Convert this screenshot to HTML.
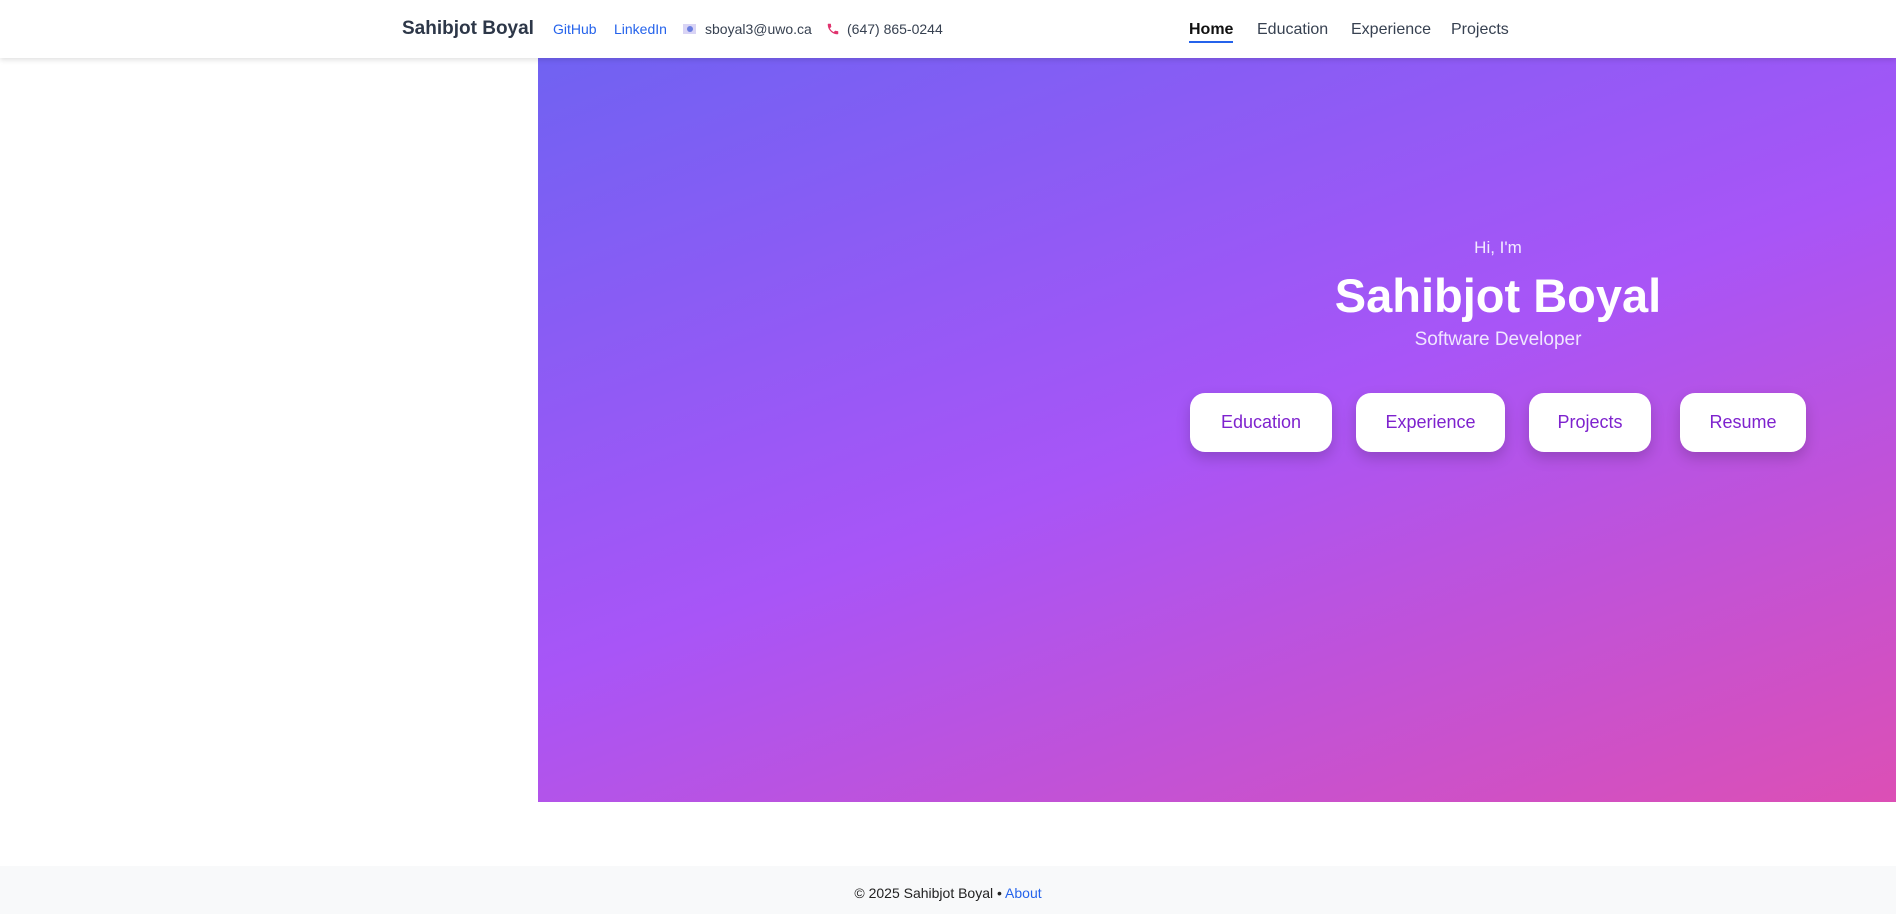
<!DOCTYPE html>
<html><head><meta charset="utf-8"><style>
*{margin:0;padding:0;box-sizing:border-box}
body{width:1896px;height:914px;background:#fff;font-family:"Liberation Sans",sans-serif;position:relative;overflow:hidden;color:#374151}
header{position:absolute;left:0;top:0;width:1896px;height:58px;background:#fff;box-shadow:0 2px 5px rgba(0,0,0,.12);z-index:2}
.abs{position:absolute;white-space:nowrap}
.brand{left:402px;top:18px;font-size:19px;font-weight:bold;color:#2d3748}
.lnk{color:#2563eb;font-size:14px;top:21px}
.sm{font-size:14px;top:21px;color:#374151}
.nav{font-size:16px;top:21px;color:#374151}
.hero{position:absolute;left:538px;top:58px;width:1358px;height:744px;background:linear-gradient(160deg,#7062f2 0%,#a855f7 50%,#dc4fb5 100%)}
.btn{position:absolute;top:393px;height:59px;background:#fff;border-radius:15px;color:#7e22ce;font-size:18px;display:flex;align-items:center;justify-content:center;box-shadow:0 6px 14px rgba(0,0,0,.18)}
footer{position:absolute;left:0;top:866px;width:1896px;height:48px;background:#f8f9fa;text-align:center;font-size:14px;line-height:54px;color:#222}
</style></head><body>
<header>
<div class="abs brand">Sahibjot Boyal</div>
<div class="abs lnk" style="left:553px">GitHub</div>
<div class="abs lnk" style="left:614px">LinkedIn</div>
<div class="abs" style="left:683px;top:24px;width:13px;height:10px;background:#d9d4f5"><div style="margin:2px auto;width:6px;height:6px;border-radius:50%;background:#6b7ee0"></div></div>
<div class="abs sm" style="left:705px">sboyal3@uwo.ca</div>
<svg class="abs" style="left:826px;top:22px" width="14" height="14" viewBox="0 0 24 24"><path fill="#e0336e" d="M6.6 10.8c1.4 2.8 3.8 5.1 6.6 6.6l2.2-2.2c.3-.3.7-.4 1-.2 1.1.4 2.3.6 3.6.6.6 0 1 .4 1 1V20c0 .6-.4 1-1 1C10.6 21 3 13.4 3 4c0-.6.4-1 1-1h3.5c.6 0 1 .4 1 1 0 1.3.2 2.5.6 3.6.1.3 0 .7-.2 1z"/></svg>
<div class="abs sm" style="left:847px">(647) 865-0244</div>
<div class="abs nav" style="left:1189px;font-weight:bold;color:#111">Home<div style="height:2px;background:#2563eb;margin-top:2px"></div></div>
<div class="abs nav" style="left:1257px">Education</div>
<div class="abs nav" style="left:1351px">Experience</div>
<div class="abs nav" style="left:1451px">Projects</div>
</header>
<div class="hero"></div>
<div class="abs" style="left:1398px;width:200px;text-align:center;top:238px;font-size:17px;color:#f3ecff">Hi, I'm</div>
<div class="abs" style="left:1198px;width:600px;text-align:center;top:268px;font-size:47px;font-weight:bold;color:#fff">Sahibjot Boyal</div>
<div class="abs" style="left:1298px;width:400px;text-align:center;top:329px;font-size:19px;color:#f0e6ff">Software Developer</div>
<div class="btn" style="left:1190px;width:142px">Education</div>
<div class="btn" style="left:1356px;width:149px">Experience</div>
<div class="btn" style="left:1529px;width:122px">Projects</div>
<div class="btn" style="left:1680px;width:126px">Resume</div>
<footer>© 2025 Sahibjot Boyal • <span style="color:#2563eb">About</span></footer>
</body></html>
